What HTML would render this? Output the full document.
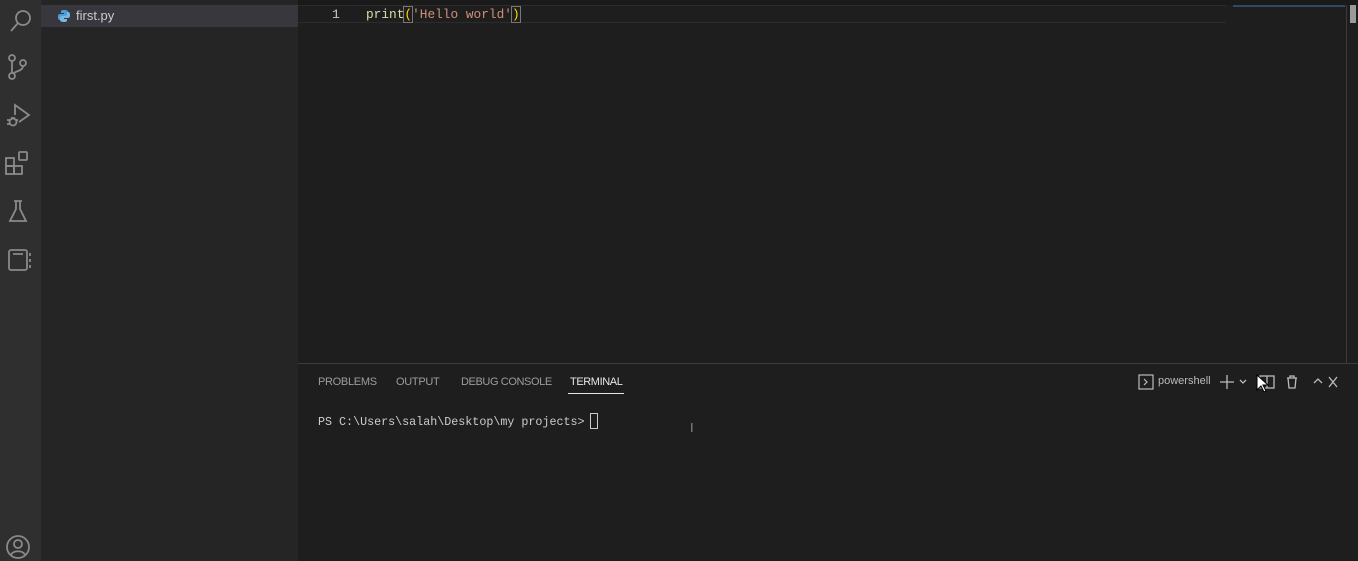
<!DOCTYPE html>
<html><head><style>
*{margin:0;padding:0;box-sizing:border-box}
body{width:1358px;height:561px;background:#1e1e1e;position:relative;overflow:hidden;font-family:"Liberation Sans",sans-serif}
.abs{position:absolute}
.mono{font-family:"Liberation Mono",monospace}
svg{position:absolute}
</style></head><body>
<div class="abs" style="left:0;top:0;width:41px;height:561px;background:#2f2f2f"></div>
<div class="abs" style="left:41px;top:0;width:257px;height:561px;background:#252526"></div>
<div class="abs" style="left:41px;top:5px;width:257px;height:22px;background:#37373d"></div>
<div class="abs" style="left:298px;top:0;width:1060px;height:5px;background:#1a1a1a"></div>
<svg style="left:57px;top:9px" width="14" height="14" viewBox="0 0 14 14"><path d="M7 1c-3 0-3 1-3 2v1h3v1H3C1 5 1 7 1 8s0 3 2 3h1V9c0-1 1-2 2-2h3c1 0 2-1 2-2V3c0-1-1-2-4-2z" fill="#4a9fd6"/><path d="M7 13c3 0 3-1 3-2v-1H7V9h4c2 0 2-2 2-3s0-3-2-3h-1v2c0 1-1 2-2 2H5c-1 0-2 1-2 2v2c0 1 1 2 4 2z" fill="#7ab6df"/></svg>
<div class="abs" style="left:76px;top:8px;font-size:13px;color:#cccccc">first.py</div>
<svg style="left:5px;top:5px" width="32" height="32" viewBox="0 0 32 32" fill="none" stroke="#8a8a8a" stroke-width="1.8"><circle cx="18" cy="13" r="7"/><path d="M13 18l-7 8"/></svg>
<svg style="left:5px;top:53px" width="32" height="32" viewBox="0 0 32 32" fill="none" stroke="#8a8a8a" stroke-width="1.8"><circle cx="7" cy="5" r="3"/><circle cx="7" cy="23" r="3"/><circle cx="18" cy="10" r="3"/><path d="M7 8v12M18 13c0 5-8 5-10 8"/></svg>
<svg style="left:5px;top:101px" width="32" height="32" viewBox="0 0 32 32" fill="none" stroke="#8a8a8a" stroke-width="1.8"><path d="M10 14V4l14 10-10 7"/><circle cx="8" cy="21" r="3.5"/><path d="M2 19h3M2 23h3M11 19h2M6 17l4 0"/></svg>
<svg style="left:5px;top:149px" width="32" height="32" viewBox="0 0 32 32" fill="none" stroke="#8a8a8a" stroke-width="1.8"><rect x="1" y="9" width="8" height="8"/><rect x="1" y="17" width="8" height="8"/><rect x="9" y="17" width="8" height="8"/><rect x="14" y="3" width="8" height="8" rx="1"/></svg>
<svg style="left:5px;top:197px" width="32" height="32" viewBox="0 0 32 32" fill="none" stroke="#8a8a8a" stroke-width="1.8"><path d="M9 4h8M11 4v8L5 24h16L15 12V4"/></svg>
<svg style="left:5px;top:245px" width="32" height="32" viewBox="0 0 32 32" fill="none" stroke="#8a8a8a" stroke-width="1.8"><rect x="4" y="5" width="18" height="20" rx="2"/><path d="M8 9h10M25 8v3M25 14v3M25 20v3"/></svg>
<svg style="left:5px;top:534px" width="26" height="26" viewBox="0 0 26 26" fill="none" stroke="#8a8a8a" stroke-width="1.8"><circle cx="13" cy="13" r="11"/><circle cx="13" cy="10" r="4"/><path d="M6 21c2-5 12-5 14 0"/></svg>
<div class="abs" style="left:298px;top:5px;width:928px;height:18px;border-top:1px solid #2c2c2c;border-bottom:1px solid #2c2c2c"></div>
<div class="abs mono" style="left:332px;top:7px;font-size:13px;color:#c6c6c6">1</div>
<div class="abs mono" style="left:366px;top:7px;font-size:12.8px;color:#dcdcaa;white-space:pre">print<span style="color:#ffd700;outline:1px solid #777">(</span><span style="color:#ce9178">'Hello world'</span><span style="color:#ffd700;outline:1px solid #777">)</span></div>
<div class="abs" style="left:1233px;top:5px;width:112px;height:2px;background:#2d4a66"></div>
<div class="abs" style="left:1346px;top:5px;width:1px;height:358px;background:#3a3a3a"></div>
<div class="abs" style="left:1350px;top:5px;width:6px;height:18px;background:#9a9a9a"></div>
<div class="abs" style="left:298px;top:363px;width:1060px;height:1px;background:#3c3c3c"></div>
<div class="abs" style="left:318px;top:376px;font-size:11px;color:#9d9d9d;letter-spacing:-0.3px">PROBLEMS</div>
<div class="abs" style="left:396px;top:376px;font-size:11px;color:#9d9d9d;letter-spacing:-0.3px">OUTPUT</div>
<div class="abs" style="left:461px;top:376px;font-size:11px;color:#9d9d9d;letter-spacing:-0.4px">DEBUG CONSOLE</div>
<div class="abs" style="left:570px;top:376px;font-size:11px;color:#e7e7e7;letter-spacing:-0.4px">TERMINAL</div>
<div class="abs" style="left:568px;top:393px;width:56px;height:1px;background:#e7e7e7"></div>
<div class="abs mono" style="left:318px;top:415px;font-size:11.7px;color:#cccccc;white-space:pre">PS C:\Users\salah\Desktop\my projects&gt;</div>
<div class="abs" style="left:590px;top:413px;width:8px;height:16px;border:1px solid #cccccc"></div>
<div class="abs" style="left:690px;top:420px;font-size:13px;color:#888">I</div>
<svg style="left:1138px;top:374px" width="16" height="16" viewBox="0 0 16 16" fill="none" stroke="#bbb" stroke-width="1.2"><rect x="1" y="1" width="14" height="14"/><path d="M6 5l3 3-3 3"/></svg>
<div class="abs" style="left:1158px;top:375px;font-size:11px;color:#bbb">powershell</div>
<svg style="left:1218px;top:373px" width="130" height="18" viewBox="0 0 130 18" fill="none" stroke="#bbb" stroke-width="1.3"><path d="M9 2v14M2 9h14M22 7l3 3 3-3"/><rect x="42" y="3" width="14" height="12"/><path d="M49 3v12M69 5h10M72 5V3h4v2M70 5l1 10h6l1-10M96 10l4-4 4 4M119 4l-8 10M111 4l8 10"/></svg>
<svg style="left:1256px;top:374px" width="14" height="20" viewBox="0 0 14 20"><path d="M1 1v15l4-4 3 6 2-1-3-6h5z" fill="#fff" stroke="#000" stroke-width="1"/></svg>
</body></html>
